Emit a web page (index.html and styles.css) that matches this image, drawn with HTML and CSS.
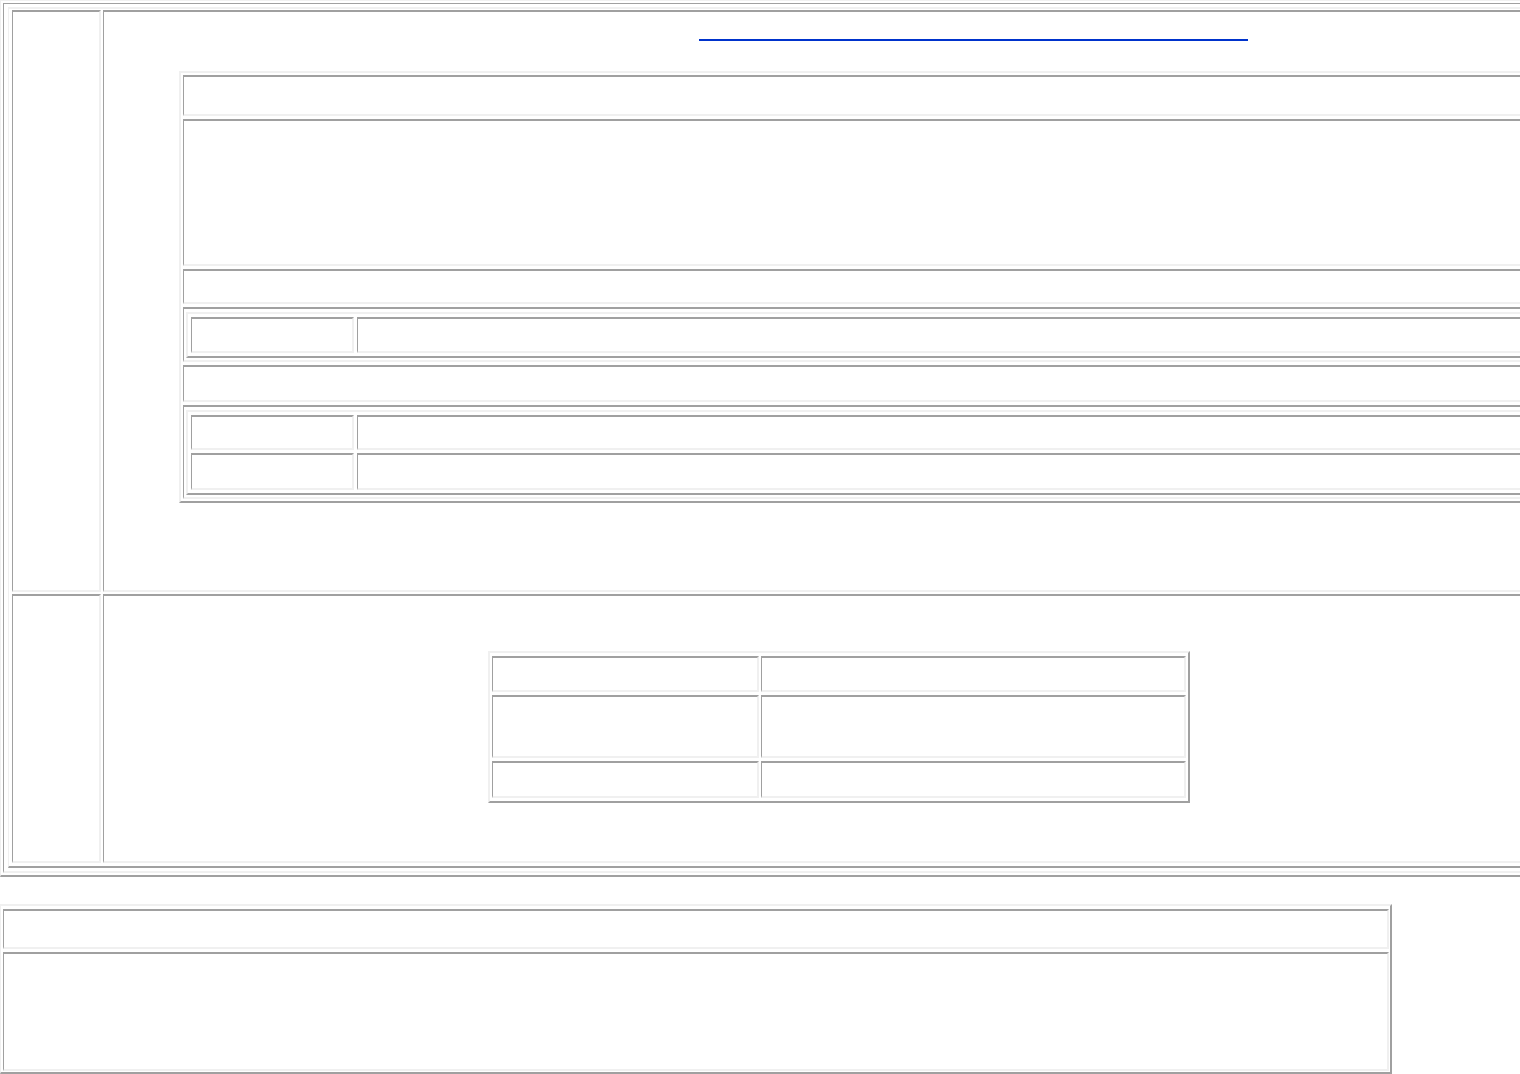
FILE: index.html
```html
<!DOCTYPE html>
<html lang="en">
<head>
    <meta charset="UTF-8">
    <meta name="viewport" content="width=device-width, initial-scale=1.0">
    <title>Report</title>
    <link rel="stylesheet" href="styles.css">
</head>
<body>
    <div class="frame">
        <div class="frame-cell">
            <div class="tbl layout">
                <div class="cell side"></div>
                <div class="cell main-top">
                    <a class="title-link" href="#"></a>

                    <div class="tbl form-tbl">
                        <div class="cell row-head"></div>
                        <div class="cell row-body"></div>
                        <div class="cell row-sub"></div>
                        <div class="cell row-nest">
                            <div class="tbl pair-tbl">
                                <div class="cell pair-key row-1"></div>
                                <div class="cell pair-val row-1"></div>
                            </div>
                        </div>
                        <div class="cell row-sub2"></div>
                        <div class="cell row-nest">
                            <div class="tbl pair-tbl">
                                <div class="cell pair-key row-1"></div>
                                <div class="cell pair-val row-1"></div>
                                <div class="cell pair-key row-2"></div>
                                <div class="cell pair-val row-2"></div>
                            </div>
                        </div>
                    </div>
                </div>
                <div class="cell side"></div>
                <div class="cell main-bottom">
                    <div class="tbl stats-tbl">
                        <div class="cell"></div>
                        <div class="cell"></div>
                        <div class="cell"></div>
                        <div class="cell"></div>
                        <div class="cell"></div>
                        <div class="cell"></div>
                    </div>
                </div>
            </div>
        </div>
    </div>

    <div class="tbl notes-tbl">
        <div class="cell"></div>
        <div class="cell"></div>
    </div>
</body>
</html>
```

FILE: styles.css
```css
* {
    box-sizing: border-box;
}
html, body {
    overflow: hidden;
}
body {
    margin: 0;
    background-color: #ffffff;
    font-family: "Liberation Serif", serif;
    font-size: 16px;
}

/* table = raised edge, cell = sunken edge */
.tbl {
    border-style: solid;
    border-color: #f0f0f0 #a0a0a0 #a0a0a0 #f0f0f0;
    border-width: 2px;
}
.cell {
    border-style: solid;
    border-color: #a0a0a0 #f0f0f0 #f0f0f0 #a0a0a0;
    border-width: 2px 2px 2px 1px;
}

/* outer wrapper */
.frame {
    width: fit-content;
    border-style: solid;
    border-color: #f0f0f0 #a0a0a0 #a0a0a0 #f0f0f0;
    border-width: 1px 2px 2px 1px;
    padding: 2px;
}
.frame-cell {
    border-style: solid;
    border-color: #a0a0a0 #f0f0f0 #f0f0f0 #a0a0a0;
    border-width: 1px 2px 2px 1px;
    padding: 3px 4px 3px 4px;
}
.layout {
    display: grid;
    grid-template-columns: 89px 1620px;
    grid-template-rows: 582px 269px;
    gap: 2px;
    border-width: 2px 2px 2px 1px;
    padding: 1px 3px 3px 3px;
}

/* top section */
.title-link {
    display: block;
    width: 549px;
    height: 29px;
    margin-left: 595px;
    border-bottom: 2px solid #0033cc;
    text-decoration: none;
}
.form-tbl {
    display: flex;
    flex-direction: column;
    gap: 3px;
    width: 1500px;
    margin: 30px 0 0 75px;
    padding: 2px;
}
.form-tbl > .cell {
    padding: 3px 2px 2px 2px;
}
.row-head {
    height: 41px;
}
.row-body {
    height: 147px;
}
.row-sub {
    height: 35px;
}
.row-sub2 {
    height: 37px;
}
.pair-tbl {
    display: grid;
    grid-template-columns: 163px 1fr;
    gap: 3px;
    padding: 3px;
}
.pair-tbl .row-1 {
    height: 36px;
}
.row-nest + .row-sub2 + .row-nest .pair-tbl .row-1 {
    height: 35px;
}
.pair-tbl .row-2 {
    height: 37px;
}

/* bottom section */
.stats-tbl {
    display: grid;
    grid-template-columns: 267px 425px;
    grid-template-rows: 36px 63px 37px;
    column-gap: 2px;
    row-gap: 3px;
    width: 702px;
    margin: 55px 0 0 384px;
    padding: 3px 2px 3px 2px;
}

/* notes table */
.notes-tbl {
    display: grid;
    grid-template-rows: 40px 119px;
    gap: 3px;
    width: 1392px;
    margin-top: 27px;
    border-width: 2px 2px 2px 1px;
    padding: 3px 1px 1px 2px;
}
```
